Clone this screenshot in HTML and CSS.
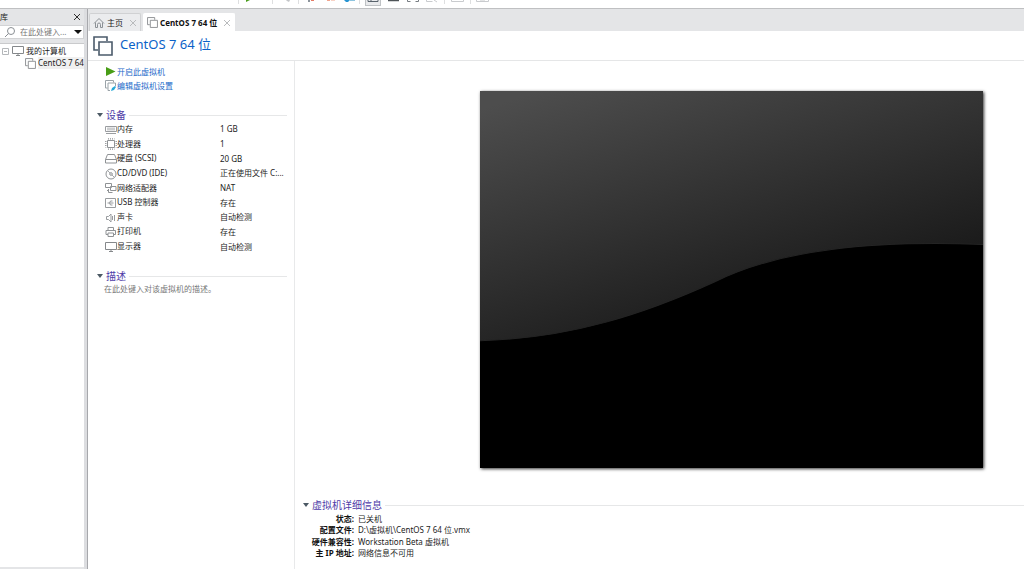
FILE: index.html
```
<!DOCTYPE html>
<html lang="zh-CN">
<head>
<meta charset="utf-8">
<title>CentOS 7 64 位</title>
<link rel="stylesheet" href="styles.css">
</head>
<body>
<svg class="symbols" aria-hidden="true">
  <symbol id="vm" viewBox="0 0 20 20"><path d="M5 14H1V1h13v4M6 6h13v13H6z" fill="none" stroke="currentColor" stroke-width="1.6"/></symbol>
  <symbol id="monitor" viewBox="0 0 12 12"><path d="M.5 1.500h11v7H.5zM4 10.500h4M6 8.500v2" fill="none" stroke="currentColor"/></symbol>
  <symbol id="close" viewBox="0 0 8 8"><path d="M1 1l6 6M7 1L1 7" fill="none" stroke="currentColor"/></symbol>
</svg>
<div class="app">
  <header class="toolbar">
    <span class="sep"></span>
    <button class="tool" aria-label="电源"><svg viewBox="0 0 16 8"><path d="M7 0h4L7 2z" fill="#4a9d1c"/></svg></button>
    <span class="sep"></span>
    <button class="tool" aria-label="发送按键"><svg viewBox="0 0 16 8"><path d="M8 0h4l-1 2-2-1z" fill="#c3c5c8"/></svg></button>
    <span class="sep"></span>
    <button class="tool" aria-label="快照"><svg viewBox="0 0 16 8"><path d="M7 0v2" stroke="#66717b" stroke-width="1.5"/><path d="M9 0h3v1H9z" fill="#e57b65"/></svg></button>
    <button class="tool" aria-label="恢复快照"><svg viewBox="0 0 16 8"><path d="M4 0h3v1H4z" fill="#f1a58e"/><path d="M8 0h4v1H8z" fill="#f8d2c5"/></svg></button>
    <button class="tool" aria-label="管理快照"><svg viewBox="0 0 16 8"><path d="M2 0h6L6 2H4z" fill="#2794d2"/><path d="M8 0h5v1H8z" fill="#8ec4df"/></svg></button>
    <span class="sep"></span>
    <button class="tool pressed" aria-label="显示库"><svg viewBox="0 0 14 5"><path d="M2 0v1.500h10V0M5 0v1.500" fill="none" stroke="#59636c"/></svg></button>
    <button class="tool" aria-label="缩略图栏"><svg viewBox="0 0 16 8"><path d="M0 .5h11" stroke="#4f5458" stroke-width="1.5"/></svg></button>
    <button class="tool" aria-label="全屏"><svg viewBox="0 0 16 8"><path d="M.5 0v1.500h3M11.500 0v1.500h-3" fill="none" stroke="#777d82"/></svg></button>
    <button class="tool" aria-label="Unity"><svg viewBox="0 0 16 8"><path d="M.5 0v1.500h6M8 0l3 2" fill="none" stroke="#c9cbce"/></svg></button>
    <span class="sep"></span>
    <button class="tool" aria-label="控制台"><svg viewBox="0 0 16 8"><path d="M1.500 0v1.500h12V0" fill="none" stroke="#c9cbce"/></svg></button>
    <span class="sep"></span>
    <button class="tool" aria-label="拉伸"><svg viewBox="0 0 16 8"><path d="M.5 0v1.500h12V0M4 0h5" fill="none" stroke="#c9cbce"/></svg></button>
  </header>
  <aside class="library">
    <div class="library-head"><span>库</span><button class="close dark" aria-label="关闭库"><svg><use href="#close"/></svg></button></div>
    <label class="search">
      <svg class="lens" viewBox="0 0 12 12"><path d="M4.500 7.500L1 11" stroke="#8a8f94"/><circle cx="7" cy="5" r="3.500" fill="none" stroke="#8a8f94"/></svg>
      <input type="text" placeholder="在此处键入..." aria-label="在此处键入">
      <button class="drop" aria-label="筛选"></button>
    </label>
    <div class="tree">
      <div class="node"><svg class="expander" viewBox="0 0 7 7"><path d="M.5.5h6v6h-6zM2 3.500h3" fill="none" stroke="#b4b7ba"/></svg><svg class="icon"><use href="#monitor"/></svg><span>我的计算机</span></div>
      <div class="node child"><svg class="icon"><use href="#vm"/></svg><span class="selected">CentOS 7 64 位</span></div>
    </div>
  </aside>
  <div class="splitter"></div>
  <main class="main">
    <nav class="tabs">
      <div class="tab"><svg class="icon" viewBox="0 0 12 12"><path d="M1 6.500L6 1.500l5 5M2.500 5.500v5h2v-3a1.500 1.500 0 0 1 3 0v3h2v-5" fill="none" stroke="#8b9095"/></svg><a href="#home">主页</a><button class="close" aria-label="关闭主页"><svg><use href="#close"/></svg></button></div>
      <div class="tab active"><svg class="icon"><use href="#vm"/></svg><a href="#vm-page">CentOS 7 64 位</a><button class="close" aria-label="关闭标签"><svg><use href="#close"/></svg></button></div>
    </nav>
    <div class="title"><svg><use href="#vm"/></svg><h1>CentOS 7 64 位</h1></div>
    <div class="page">
      <section class="summary">
        <div class="actions">
          <a href="#start"><svg class="icon" viewBox="0 0 12 12"><path d="M1 1l9.500 4.500L1 10z" fill="#489d16"/></svg>开启此虚拟机</a>
          <a href="#edit"><svg class="icon" viewBox="0 0 12 12"><path d="M2.500 8H.5V.5h8v2M5 10.500H3V3h7.500v3" fill="none" stroke="#9aa3a8"/><path d="M6 11l1-3 3-2 1 1-2 3z" fill="#27a9d8"/></svg>编辑虚拟机设置</a>
        </div>
        <h2 class="heading">设备</h2>
        <table class="devices">
          <tr><th><svg class="icon" viewBox="0 0 12 12"><path d="M.5 2.500h11v5H.5zM1 9.500h10M3 3.500v3M5 3.500v3M7 3.500v3M9 3.500v3" fill="none" stroke="#9a9da0"/></svg>内存</th><td>1 GB</td></tr>
          <tr><th><svg class="icon" viewBox="0 0 12 12"><path d="M2.500 2.500h7v7h-7z" fill="none" stroke="#8f9295"/><path d="M3 .8h6.500M3 11.200h6.500M.8 3v6.500M11.200 3v6.500" stroke="#8f9295" stroke-width="1.300" stroke-dasharray="1 1"/></svg>处理器</th><td>1</td></tr>
          <tr><th><svg class="icon" viewBox="0 0 12 12"><path d="M.5 6.500l2-5h7l2 5v3.500H.5zM.5 6.500h11" fill="none" stroke="#8f9295"/></svg>硬盘 (SCSI)</th><td>20 GB</td></tr>
          <tr><th><svg class="icon" viewBox="0 0 12 12"><circle cx="6" cy="6" r="5" fill="none" stroke="#8f9295"/><circle cx="6" cy="6" r="1.300" fill="none" stroke="#8f9295"/><path d="M3 3l2 2M7 7l2 2" stroke="#a5a8aa"/></svg>CD/DVD (IDE)</th><td>正在使用文件 C:...</td></tr>
          <tr><th><svg class="icon" viewBox="0 0 12 12"><path d="M.5 1.500h6v4h-6zM5.500 5.500v-1H11v4H5.500zM2 8.500h2M3.500 7v3.500h4" fill="none" stroke="#8f9295"/></svg>网络适配器</th><td>NAT</td></tr>
          <tr><th><svg class="icon" viewBox="0 0 12 12"><path d="M.5 1.500h10v9H.5zM2.500 6h6M4.500 6l1-2h2M4.500 6l1 2h2" fill="none" stroke="#999c9f"/></svg>USB 控制器</th><td>存在</td></tr>
          <tr><th><svg class="icon" viewBox="0 0 12 12"><path d="M1.500 4.500h2L6 2v8L3.500 7.500h-2zM7.500 4v4M9.500 3v6" fill="none" stroke="#999c9f"/></svg>声卡</th><td>自动检测</td></tr>
          <tr><th><svg class="icon" viewBox="0 0 12 12"><path d="M3 4V1.500h5.500V4M3 8.500H1v-4h9.500v4h-2M3 7h5.500v3.500H3z" fill="none" stroke="#8f9295"/></svg>打印机</th><td>存在</td></tr>
          <tr><th><svg class="icon"><use href="#monitor"/></svg>显示器</th><td>自动检测</td></tr>
        </table>
        <h2 class="heading">描述</h2>
        <p class="description">在此处键入对该虚拟机的描述。</p>
      </section>
      <section class="view">
        <svg class="screen" viewBox="0 0 502 376" preserveAspectRatio="none" role="img" aria-label="虚拟机屏幕">
          <defs><linearGradient id="sheen" gradientUnits="userSpaceOnUse" x1="5" y1="17" x2="89" y2="282"><stop stop-color="#4d4d4d"/><stop offset="1" stop-color="#1b1b1b"/></linearGradient></defs>
          <path d="M0 0h502v376H0z"/>
          <path d="M0 0V249C90 247 165 222 235 190C300 158 390 149 502 153V0z" fill="url(#sheen)"/>
          <path d="M0 249C90 247 165 222 235 190C300 158 390 149 502 153" fill="none" stroke="#242424"/>
        </svg>
        <div class="details">
          <h2 class="heading">虚拟机详细信息</h2>
          <dl>
            <dt>状态:</dt><dd>已关机</dd>
            <dt>配置文件:</dt><dd>D:\虚拟机\CentOS 7 64 位.vmx</dd>
            <dt>硬件兼容性:</dt><dd>Workstation Beta 虚拟机</dd>
            <dt>主 IP 地址:</dt><dd>网络信息不可用</dd>
          </dl>
        </div>
      </section>
    </div>
  </main>
</div>
</body>
</html>
```
FILE: styles.css
```
* { box-sizing: border-box; }
body {
  margin: 0;
  font: 8px/12px "Noto Sans", "Noto Sans CJK SC", sans-serif;
  color: #1c1c1c;
  background: #fff;
}
button { padding: 0; border: 0; background: none; color: inherit; }
a { color: inherit; text-decoration: none; }
h1, h2, p, dl, dd { margin: 0; font-weight: 400; }
svg { display: block; flex: none; }
.symbols { position: absolute; width: 0; height: 0; }
.icon { width: 12px; height: 12px; color: #85888b; }

.app {
  display: grid;
  grid-template: 9px 1fr / 84px 4px 1fr;
  height: 100vh;
  overflow: hidden;
}
.toolbar {
  grid-column: 1 / -1;
  display: grid;
  grid-template-columns: 1px 33px 1px 25px 1px 22px 19px 19px 1px 26px 19px 19px 20px 1px 25px 1px 25px;
  justify-items: center;
  padding-left: 238px;
  border-bottom: 1px solid #bfc0c2;
}
.toolbar .sep { width: 1px; height: 4px; background: #dedfe0; }
.tool { width: 16px; height: 8px; }
.tool svg { width: 16px; height: 8px; }
.tool:nth-child(2) { justify-self: start; }
.pressed { height: 6px; border: 1px solid #bfc2c5; border-top: 0; background: #e9eaec; }
.pressed svg { width: 14px; height: 5px; }

.library { display: flex; flex-direction: column; background: #e4e5e7; overflow: hidden; padding-bottom: 2px; }
.library-head { display: flex; justify-content: space-between; align-items: center; height: 16px; padding-right: 3px; }
.close { width: 8px; height: 8px; color: #b9bbbd; }
.close svg { width: 8px; height: 8px; }
.dark { color: #303030; }
.search { display: flex; align-items: center; gap: 4px; height: 14px; padding: 0 1px 0 4px; border: 1px solid #d2d3d5; border-left: 0; background: #fff; }
.lens { width: 12px; height: 12px; }
.search input { flex: 1; min-width: 0; padding: 0; border: 0; outline: 0; background: none; font: inherit; }
.search input::placeholder { color: #777; opacity: 1; }
.drop { width: 0; height: 0; border: 4px solid transparent; border-top-color: #111; border-bottom: 0; }
.tree { flex: 1; margin-top: 4px; padding-top: 1px; border-top: 1px solid #c9cacc; background: #fff; }
.node { display: flex; align-items: center; gap: 2px; height: 12px; padding-left: 2px; white-space: nowrap; }
.expander { width: 7px; height: 7px; }
.node .icon { margin-left: 1px; }
.child { padding-left: 24px; }
.child .icon { width: 11px; height: 11px; }
.selected { background: #f0f0f0; }
.splitter { border-right: 1px solid #a7a8ac; background: #dcdde0; }

.main { display: flex; flex-direction: column; min-width: 0; }
.tabs { display: flex; gap: 2px; height: 22px; padding: 4px 0 0 1px; background: #e4e5e7; }
.tab { display: flex; align-items: center; gap: 2px; padding: 0 3px; border: 1px solid #d0d1d3; border-bottom: 0; border-radius: 2px 2px 0 0; background: #ebecee; }
.tab .close { margin-left: 4px; }
.active { border-color: #fff; background: #fff; font-weight: 700; color: #111; }
.active .icon { width: 11px; height: 11px; }
.title { display: flex; align-items: center; gap: 7px; height: 30px; padding-left: 5px; border-bottom: 1px solid #e5e6e7; color: #4b5b6b; }
.title svg { width: 20px; height: 20px; }
h1 { font-size: 13px; line-height: 18px; padding-bottom: 4px; color: #0b62c8; }
.page { flex: 1; display: grid; grid-template-columns: 207px 1fr; min-height: 0; }
.summary { padding: 4px 7px 0 8px; border-right: 1px solid #e8e9ea; }
.actions a { display: flex; align-items: center; height: 14px; padding-left: 9px; color: #1b69c9; }
.heading { display: flex; align-items: center; gap: 3px; height: 14px; font-size: 10px; line-height: 14px; color: #4e3ba8; }
.heading::before { content: ""; border: 3px solid transparent; border-top: 4px solid #4b5964; border-bottom: 0; margin-left: 1px; }
.heading::after { content: ""; flex: 1; border-top: 1px solid #e6e7e8; }
.actions + .heading { margin-top: 15px; }
.devices { width: 100%; height: 132px; border-collapse: collapse; table-layout: fixed; }
.devices th, .devices td { padding: 0; font-weight: 400; text-align: left; white-space: nowrap; }
.devices th { width: 124px; padding-left: 9px; }
.devices th .icon { display: inline-block; vertical-align: middle; }
.devices + .heading { margin-top: 15px; }
.description { padding-left: 8px; color: #777; }

.view { display: flex; flex-direction: column; padding: 30px 0 0 7px; min-width: 0; }
.screen { width: calc(100% - 219px); height: auto; aspect-ratio: 503 / 377; margin-left: 178px; box-shadow: 1px 1px 3px #000c; }
.details { margin-top: 30px; }
.details dl { display: grid; grid-template-columns: 52px 1fr; grid-auto-rows: 1fr; column-gap: 4px; height: 46px; padding-top: 1px; line-height: 11px; }
.details dt { font-weight: 700; text-align: right; color: #111; white-space: nowrap; }
```
